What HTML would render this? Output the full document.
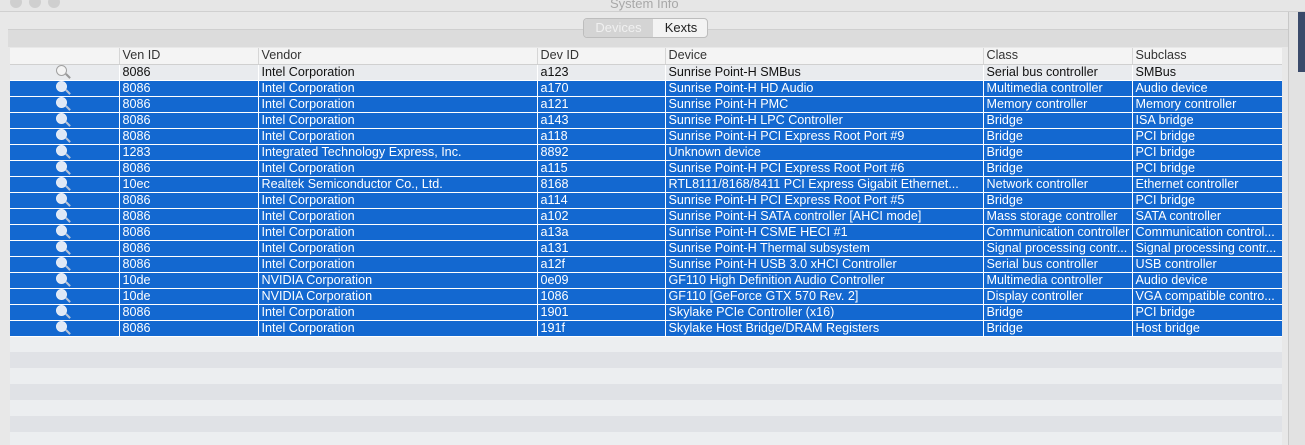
<!DOCTYPE html>
<html><head><meta charset="utf-8"><style>
*{margin:0;padding:0;box-sizing:border-box}
body{width:1305px;height:445px;overflow:hidden;background:#e8e8e8;font-family:"Liberation Sans",sans-serif;font-size:12.6px;position:relative}
.title{position:absolute;left:0;top:0;width:1305px;height:12px;background:#e6e6e6;border-bottom:1px solid #d0d0d0}
.title span{position:absolute;left:610px;top:-4px;color:#a8a8a8;font-size:13px}
.dot{position:absolute;top:-4px;width:12px;height:12px;border-radius:50%;background:#cfcfcf}
.band{position:absolute;left:8px;top:29px;width:1280px;height:18px;background:#dcdcdc;border-top:1px solid #cfcfcf}
.seg{position:absolute;left:583px;top:18px;width:125px;height:20px;border:1px solid #bdbdbd;border-radius:4px;overflow:hidden;background:#f3f3f3}
.seg .a{position:absolute;left:0;top:0;width:69px;height:20px;background:#d4d4d4;color:#f0f0f0;text-align:center;line-height:18px;font-size:13px}
.seg .b{position:absolute;left:69px;top:0;width:56px;height:20px;color:#222;text-align:center;line-height:18px;font-size:13px}
.tbl{position:absolute;left:10px;top:48px;width:1272px;height:397px;background:#eceef0}
.stripe{position:absolute;left:10px;width:1272px;height:16px;background:#e0e2e6}
table{position:absolute;left:10px;top:48px;border-collapse:collapse;table-layout:fixed;width:1272px}
td{height:16px;line-height:15px;padding:0 0 0 3px;white-space:nowrap;overflow:hidden;border-left:1px solid #fff;border-bottom:1px solid #fff}
td:first-child{border-left:none}
tr.h td{background:#f4f4f4;color:#333;border-left:1px solid #d6d6d6;border-bottom:1px solid #d0d0d0}
tr.h td:first-child{border-left:none}
tr.u td{background:#e9ebee;color:#111}
tr.s td{background:#1368d0;color:#fff}
.ic{text-align:center;padding:0}
.m{display:inline-block;width:11px;height:11px;border:1.5px solid #a0a0a0;border-radius:50%;position:relative;top:0px;left:-3px;background:#f4f4f4}
.m:after{content:"";position:absolute;left:8px;top:9px;width:6px;height:2px;background:#999;transform:rotate(45deg)}
tr.s .m{border-color:#e8eef8;background:#dfe8f6}
tr.s .m:after{background:#b8c4d8}
.rt{position:absolute;left:1288px;top:12px;width:17px;height:433px;background:#e2e2e2;border-left:1px solid #c8c8c8}
.rt2{position:absolute;left:1298px;top:12px;width:7px;height:60px;background:#3a4a6a}
</style></head><body>
<div class="title"><div class="dot" style="left:10px"></div><div class="dot" style="left:29px"></div><div class="dot" style="left:48px"></div><span>System Info</span></div>
<div class="band"></div>
<div class="seg"><div class="a">Devices</div><div class="b">Kexts</div></div>
<div class="rt"></div><div class="rt2"></div>
<div class="tbl"></div>
<div class="stripe" style="top:352px"></div>
<div class="stripe" style="top:384px"></div>
<div class="stripe" style="top:416px"></div>
<table>
<colgroup><col style="width:109px"><col style="width:139px"><col style="width:279px"><col style="width:128px"><col style="width:318px"><col style="width:149px"><col style="width:150px"></colgroup>
<tr class="h"><td></td><td>Ven ID</td><td>Vendor</td><td>Dev ID</td><td>Device</td><td>Class</td><td>Subclass</td></tr>
<tr class="u"><td class="ic"><i class="m"></i></td><td>8086</td><td>Intel Corporation</td><td>a123</td><td>Sunrise Point-H SMBus</td><td>Serial bus controller</td><td>SMBus</td></tr>
<tr class="s"><td class="ic"><i class="m"></i></td><td>8086</td><td>Intel Corporation</td><td>a170</td><td>Sunrise Point-H HD Audio</td><td>Multimedia controller</td><td>Audio device</td></tr>
<tr class="s"><td class="ic"><i class="m"></i></td><td>8086</td><td>Intel Corporation</td><td>a121</td><td>Sunrise Point-H PMC</td><td>Memory controller</td><td>Memory controller</td></tr>
<tr class="s"><td class="ic"><i class="m"></i></td><td>8086</td><td>Intel Corporation</td><td>a143</td><td>Sunrise Point-H LPC Controller</td><td>Bridge</td><td>ISA bridge</td></tr>
<tr class="s"><td class="ic"><i class="m"></i></td><td>8086</td><td>Intel Corporation</td><td>a118</td><td>Sunrise Point-H PCI Express Root Port #9</td><td>Bridge</td><td>PCI bridge</td></tr>
<tr class="s"><td class="ic"><i class="m"></i></td><td>1283</td><td>Integrated Technology Express, Inc.</td><td>8892</td><td>Unknown device</td><td>Bridge</td><td>PCI bridge</td></tr>
<tr class="s"><td class="ic"><i class="m"></i></td><td>8086</td><td>Intel Corporation</td><td>a115</td><td>Sunrise Point-H PCI Express Root Port #6</td><td>Bridge</td><td>PCI bridge</td></tr>
<tr class="s"><td class="ic"><i class="m"></i></td><td>10ec</td><td>Realtek Semiconductor Co., Ltd.</td><td>8168</td><td>RTL8111/8168/8411 PCI Express Gigabit Ethernet...</td><td>Network controller</td><td>Ethernet controller</td></tr>
<tr class="s"><td class="ic"><i class="m"></i></td><td>8086</td><td>Intel Corporation</td><td>a114</td><td>Sunrise Point-H PCI Express Root Port #5</td><td>Bridge</td><td>PCI bridge</td></tr>
<tr class="s"><td class="ic"><i class="m"></i></td><td>8086</td><td>Intel Corporation</td><td>a102</td><td>Sunrise Point-H SATA controller [AHCI mode]</td><td>Mass storage controller</td><td>SATA controller</td></tr>
<tr class="s"><td class="ic"><i class="m"></i></td><td>8086</td><td>Intel Corporation</td><td>a13a</td><td>Sunrise Point-H CSME HECI #1</td><td>Communication controller</td><td>Communication control...</td></tr>
<tr class="s"><td class="ic"><i class="m"></i></td><td>8086</td><td>Intel Corporation</td><td>a131</td><td>Sunrise Point-H Thermal subsystem</td><td>Signal processing contr...</td><td>Signal processing contr...</td></tr>
<tr class="s"><td class="ic"><i class="m"></i></td><td>8086</td><td>Intel Corporation</td><td>a12f</td><td>Sunrise Point-H USB 3.0 xHCI Controller</td><td>Serial bus controller</td><td>USB controller</td></tr>
<tr class="s"><td class="ic"><i class="m"></i></td><td>10de</td><td>NVIDIA Corporation</td><td>0e09</td><td>GF110 High Definition Audio Controller</td><td>Multimedia controller</td><td>Audio device</td></tr>
<tr class="s"><td class="ic"><i class="m"></i></td><td>10de</td><td>NVIDIA Corporation</td><td>1086</td><td>GF110 [GeForce GTX 570 Rev. 2]</td><td>Display controller</td><td>VGA compatible contro...</td></tr>
<tr class="s"><td class="ic"><i class="m"></i></td><td>8086</td><td>Intel Corporation</td><td>1901</td><td>Skylake PCIe Controller (x16)</td><td>Bridge</td><td>PCI bridge</td></tr>
<tr class="s"><td class="ic"><i class="m"></i></td><td>8086</td><td>Intel Corporation</td><td>191f</td><td>Skylake Host Bridge/DRAM Registers</td><td>Bridge</td><td>Host bridge</td></tr>
</table>
</body></html>
